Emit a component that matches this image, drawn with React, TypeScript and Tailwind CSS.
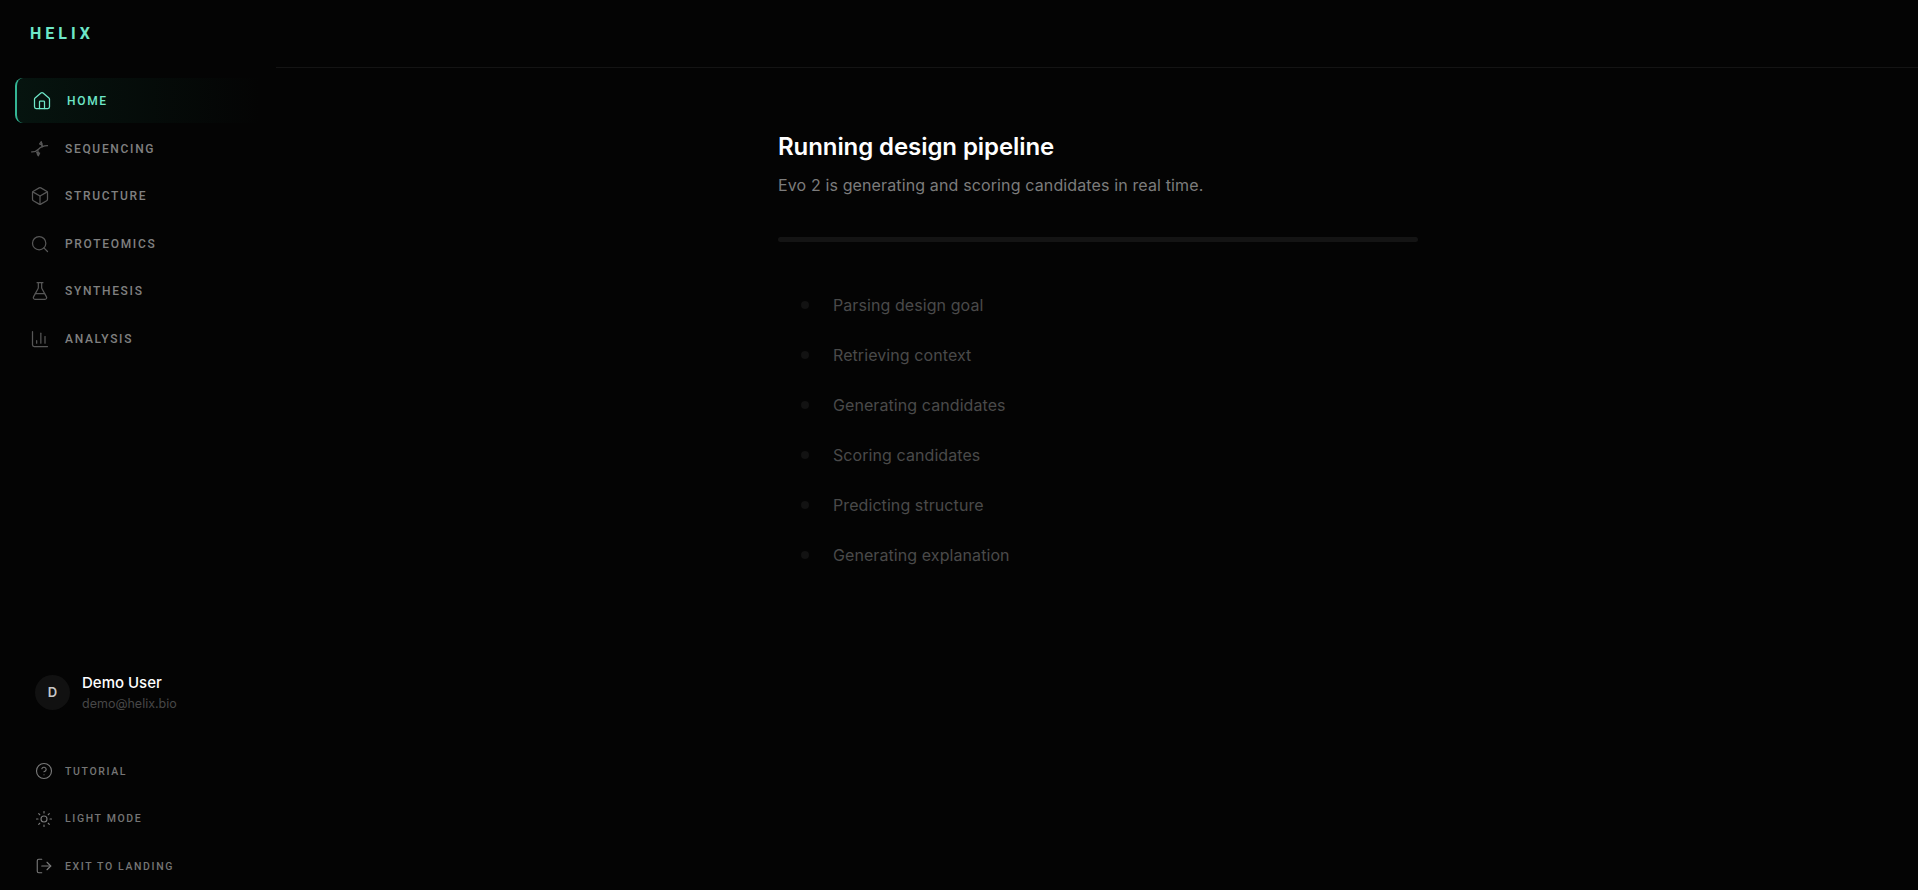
import React from 'react';
import { House, Box, Search, FlaskConical, ChartColumn, CircleHelp, Sun, LogOut } from 'lucide-react';

// Small dna glyph, lucide's one is too upright for this
const DnaIcon: React.FC<{ className?: string }> = ({ className }) => (
  <svg className={className} viewBox="0 0 24 24" fill="none" stroke="currentColor" strokeWidth="1.5" strokeLinecap="round" strokeLinejoin="round">
    <path d="M2 15.500c3 .2 6-.8 8.500-3.500s5-3.800 10.500-4" />
    <path d="M14.500 6l-1-2.500-2 2.500 3.500 1.500" />
    <path d="M13.500 3.500l1 6" />
    <path d="M8.500 17.500l1.500 2.500 1.500-3-3.500-1" />
    <path d="M10 20l-.5-6" />
  </svg>
);

const navItems = [
  { label: 'SEQUENCING', Icon: DnaIcon, rowClass: 'h-[47px]' },
  { label: 'STRUCTURE', Icon: Box, rowClass: 'h-[48px]' },
  { label: 'PROTEOMICS', Icon: Search, rowClass: 'h-[47px]' },
  { label: 'SYNTHESIS', Icon: FlaskConical, rowClass: 'h-[48px]' },
  { label: 'ANALYSIS', Icon: ChartColumn, rowClass: 'h-[47px]' },
];

const bottomItems = [
  { label: 'TUTORIAL', Icon: CircleHelp },
  { label: 'LIGHT MODE', Icon: Sun },
  { label: 'EXIT TO LANDING', Icon: LogOut },
];

const steps = [
  'Parsing design goal',
  'Retrieving context',
  'Generating candidates',
  'Scoring candidates',
  'Predicting structure',
  'Generating explanation',
];

const App: React.FC = () => {
  return (
    <div className="h-[890px] flex overflow-hidden bg-[#040404] font-['Inter',sans-serif]">
      {/* Sidebar */}
      <aside className="w-[276px] shrink-0 flex flex-col">
        <div className="h-[78px] pl-[30px] pt-[24px] font-['Roboto',sans-serif] text-[16px] leading-[20px] font-bold tracking-[0.25em] text-[#6ee7c8]">
          HELIX
        </div>

        <nav className="pl-[15px] pr-[16px] flex flex-col">
          <div className="h-[45px] mb-[2px] flex items-center pl-[15px] gap-[15px] rounded-l-lg border-l-2 border-[#34b594] bg-gradient-to-r from-[#06140f] to-transparent text-[#6ee7c8]">
            <House className="w-[20px] h-[20px] shrink-0" strokeWidth={1.5} />
            <span className="font-['Roboto',sans-serif] text-[12px] font-medium tracking-[0.14em]">HOME</span>
          </div>
          {navItems.map(({ label, Icon, rowClass }) => (
            <div key={label} className={`${rowClass} flex items-center pl-[15px] gap-[15px] text-[#808080]`}>
              <Icon className="w-[20px] h-[20px] shrink-0 text-[#575757]" strokeWidth={1.5} />
              <span className="font-['Roboto',sans-serif] text-[12px] font-medium tracking-[0.14em]">{label}</span>
            </div>
          ))}
        </nav>

        <div className="mt-auto pl-[35px] flex items-center gap-[12px]">
          <div className="w-[35px] h-[35px] rounded-full bg-[#111111] flex items-center justify-center text-[13px] font-semibold text-[#c8c8c8]">
            D
          </div>
          <div>
            <div className="text-[15px] leading-[21px] font-medium text-white">Demo User</div>
            <div className="text-[12.500px] leading-[21px] text-[#474747]">demo@helix.bio</div>
          </div>
        </div>

        <div className="mt-[34px] pl-[35px] flex flex-col">
          {bottomItems.map(({ label, Icon }) => (
            <div key={label} className="h-[47.500px] flex items-center gap-[12px] text-[#757575]">
              <Icon className="w-[18px] h-[18px] shrink-0 text-[#7a7a7a]" strokeWidth={1.5} />
              <span className="pt-[1px] font-['Roboto',sans-serif] text-[10.500px] font-medium tracking-[0.155em]">{label}</span>
            </div>
          ))}
        </div>
      </aside>

      {/* Main */}
      <div className="flex-1 flex flex-col">
        <header className="h-[68px] shrink-0 border-b border-[#141414]" />
        <main className="flex-1 flex justify-center pt-[61px] pl-[2px]">
          <div className="w-[640px]">
            <h1 className="text-[24px] leading-[36px] font-semibold tracking-[-0.08px] text-white">Running design pipeline</h1>
            <p className="mt-[8px] text-[16px] leading-[24px] tracking-[0.13px] text-[#7c7c7c]">Evo 2 is generating and scoring candidates in real time.</p>
            <div className="mt-[40px] h-[5px] rounded-full bg-[#141414]" />
            <ul className="mt-[38px] flex flex-col">
              {steps.map((step) => (
                <li key={step} className="h-[50px] flex items-center pl-[23px] gap-[24px]">
                  <span className="w-[8px] h-[8px] rounded-full bg-[#121212]" />
                  <span className="text-[16px] tracking-[0.08px] text-[#4a4a4a]">{step}</span>
                </li>
              ))}
            </ul>
          </div>
        </main>
      </div>
    </div>
  );
};

export default App;
